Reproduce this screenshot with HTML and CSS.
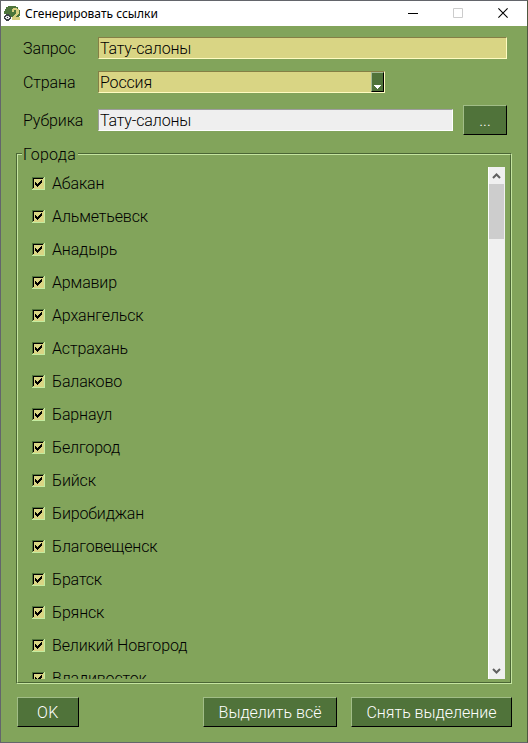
FILE: index.html
```html
<!DOCTYPE html>
<html lang="ru">
<head>
<meta charset="utf-8">
<title>Сгенерировать ссылки</title>
<link rel="stylesheet" href="styles.css">
</head>
<body>
<div class="window">
  <header class="titlebar">
    <svg class="logo" width="18" height="18" viewBox="0 0 18 18" shape-rendering="crispEdges">
      <path d="M5 1h8v1h2v2h1v1h1v6h-1v2h-1v1h-2v1H9v-3H6V9H1V6h1V4h1V2h2z" fill="#4e753b"/>
      <path d="M9 5V4h1V3h4v1h2v5h-1v1h-1v1h-1v1h4v3H9v-3h1v-1h1v-1h1V9h1V5h-2v2H9z" fill="#d9cf80"/>
      <path d="M2 10h1V9h3v1h1v1h1v3H7v1H6v1H3v-1H2v-1H1v-3h1z" fill="#3d4147"/>
      <path d="M3 11h3v1h1v1H6v1H3v-1H2v-1h1z" fill="#e8e9ec"/>
      <path d="M4 12h1v1H4z" fill="#3d4147"/>
    </svg>
    <h1 class="title">Сгенерировать ссылки</h1>
    <div class="controls">
      <svg width="11" height="11" viewBox="0 0 11 11"><path d="M0 5.5h10" stroke="#000"/></svg>
      <svg width="11" height="11" viewBox="0 0 11 11"><path d="M.5.5h9v9h-9z" fill="none" stroke="#ccc"/></svg>
      <svg width="11" height="11" viewBox="0 0 11 11"><path d="M.4.4l9.2 9.2M9.6.4L.4 9.6" stroke="#000" stroke-width="1.1"/></svg>
    </div>
  </header>
  <main class="form">
    <div class="row query"><label>Запрос</label><div class="field">Тату-салоны</div></div>
    <div class="row country"><label>Страна</label><div class="field combo"><span>Россия</span><span class="drop"><svg width="7" height="4" viewBox="0 0 7 4" shape-rendering="crispEdges"><path d="M0 0h7v1H6v1H5v1H4v1H3V3H2V2H1V1H0z" fill="#fff"/></svg></span></div></div>
    <div class="row rubric"><label>Рубрика</label><div class="field readonly">Тату-салоны</div><button class="more">...</button></div>
    <section class="group">
      <div class="group-inner">
        <h2 class="legend">Города</h2>
        <div class="viewport">
          <ul class="cities" id="cities"></ul>
          <div class="scrollbar">
            <svg class="arrow" width="17" height="17" viewBox="0 0 17 17"><path d="M5 11L8.5 7.5L12 11" fill="none" stroke="#606060" stroke-width="2"/></svg>
            <div class="thumb"></div>
            <svg class="arrow down" width="17" height="17" viewBox="0 0 17 17"><path d="M5 7L8.5 10.5L12 7" fill="none" stroke="#606060" stroke-width="2"/></svg>
          </div>
        </div>
      </div>
    </section>
    <footer class="actions">
      <button class="ok">OK</button>
      <button class="all">Выделить всё</button>
      <button class="none">Снять выделение</button>
    </footer>
  </main>
</div>
<script src="script.js"></script>
</body>
</html>
```
FILE: styles.css
```css
* { box-sizing: border-box; }
body {
  margin: 0;
  font: 300 16px/20px Roboto, "Liberation Sans", Arial, sans-serif;
  color: #000;
}
.window {
  width: 528px;
  height: 743px;
  border: 1px solid #63656b;
  border-right-color: #4e573f;
  background: #82a45b;
  overflow: hidden;
}
.titlebar {
  display: flex;
  align-items: center;
  height: 25px;
  padding-left: 2px;
  background: #fff;
}
.title {
  margin: 0 0 0 4px;
  font: 12px/16px "Noto Sans", sans-serif;
  white-space: nowrap;
}
.controls {
  display: flex;
  gap: 34px;
  margin-left: auto;
  padding-right: 18px;
}
.form { padding: 11px 15px 0; }
.row {
  display: flex;
  align-items: center;
  padding-left: 7px;
}
.row label { width: 75px; padding-top: 1px; letter-spacing: -0.1px; }
.query { height: 22px; }
.country { height: 22px; margin-top: 12px; }
.rubric { height: 30px; margin-top: 12px; }
.field {
  height: 22px;
  width: 409px;
  padding-left: 1px;
  line-height: 21px;
  letter-spacing: -0.15px;
  background: #d9d584;
  border: 1px solid;
  border-color: #857f45 #fffcc0 #fffcc0 #857f45;
}
.combo {
  display: flex;
  justify-content: space-between;
  width: 287px;
}
.drop {
  display: flex;
  align-items: flex-end;
  justify-content: center;
  width: 13px;
  height: 20px;
  padding-bottom: 2px;
  background: #50733a;
  border: 1px solid;
  border-color: #a3b994 #000 #000 #a3b994;
}
.readonly {
  width: 355px;
  background: #efefef;
  border-color: #9d9d9d #fff #fff #9d9d9d;
}
button {
  height: 30px;
  padding: 1px 0 0;
  font: inherit;
  color: #fff;
  background: #50733a;
  border: 1px solid;
  border-color: #a1bd87 #000 #000 #a1bd87;
  border-radius: 0;
}
.more { width: 44px; margin-left: 10px; }
.group {
  height: 531px;
  margin-top: 18px;
  border: 1px solid;
  border-color: #4b6635 #c5e5a0 #c5e5a0 #4b6635;
}
.group-inner {
  height: 100%;
  padding: 0 5px 0 14px;
  border: 1px solid;
  border-color: #c5e5a0 #4b6635 #4b6635 #c5e5a0;
}
.legend {
  width: 56px;
  height: 20px;
  margin: -10px 0 0 -10px;
  padding-left: 1px;
  font: inherit;
  letter-spacing: 0.3px;
  background: #82a45b;
}
.viewport {
  display: flex;
  justify-content: space-between;
  height: 512px;
  margin-top: 2px;
  overflow: hidden;
}
.cities { margin: 0; padding: 0; list-style: none; }
.cities li {
  display: flex;
  align-items: center;
  gap: 7px;
  height: 33px;
  letter-spacing: -0.15px;
  white-space: nowrap;
}
.check {
  display: block;
  width: 13px;
  height: 13px;
}
.scrollbar {
  display: flex;
  flex-direction: column;
  width: 17px;
  height: 512px;
  background: #f0f0f0;
  border-left: 1px solid #fff;
}
.arrow { display: block; flex: none; margin-left: -1px; }
.thumb { width: 15px; height: 55px; background: #cdcdcd; }
.down { margin-top: auto; }
.actions { display: flex; margin: 13px 0 0 1px; }
.ok { width: 62px; letter-spacing: 0.5px; }
.all { width: 134px; margin-left: 124px; }
.none { width: 161px; margin-left: 14px; }
```
FILE: script.js
```javascript
const cities = ["Абакан", "Альметьевск", "Анадырь", "Армавир", "Архангельск", "Астрахань", "Балаково", "Барнаул", "Белгород", "Бийск", "Биробиджан", "Благовещенск", "Братск", "Брянск", "Великий Новгород", "Владивосток"];
const check = '<svg class="check" viewBox="0 0 13 13" shape-rendering="crispEdges"><path d="M0 0h13v13H0z" fill="#c3eca0"/><path d="M0 0h12v1H1v11H0z" fill="#50733a"/><path d="M1 1h11v11H1z" fill="#d9d584"/><path d="M1 1h10v1H2v9H1z" fill="#000"/><path d="M3 5h1v1h1v1h1V6h1V5h1V4h1V3h1v3H9v1H8v1H7v1H6v1H5V9H4V8H3z" fill="#000"/></svg>';
document.getElementById("cities").innerHTML = cities.map(c => `<li>${check}<span>${c}</span></li>`).join("");
```
